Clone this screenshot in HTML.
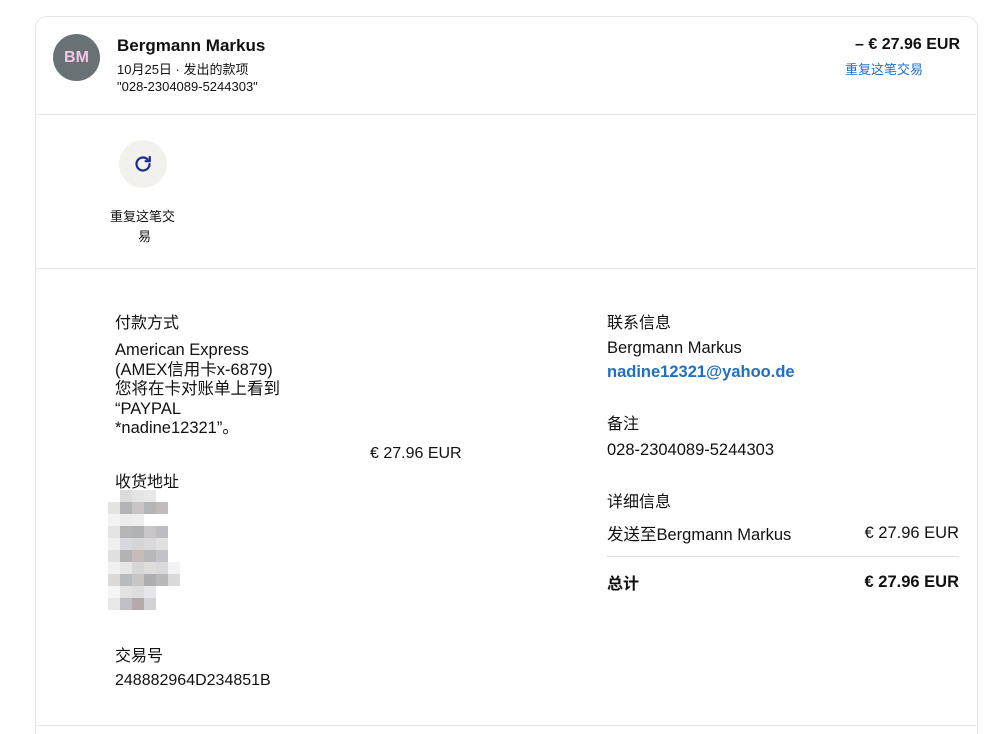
<!DOCTYPE html>
<html><head><meta charset="utf-8"><style>
html,body{margin:0;background:#fff;font-family:"Liberation Sans","Noto Sans CJK SC",sans-serif;color:#111;width:994px;height:734px;overflow:hidden;position:relative}
.card{position:absolute;left:35px;top:16px;width:941px;height:740px;border:1px solid #e6e6e6;border-radius:12px}
.a{position:absolute;white-space:nowrap}
.hr{position:absolute;left:36px;width:940px;height:1px;background:#e6e6e6}
.px{position:absolute;width:12px;height:12px}
</style></head><body>
<div class="card"></div>
<div class="a" style="left:53px;top:34px;width:47px;height:47px;border-radius:50%;background:#687173;color:#f3c6ea;font-weight:bold;font-size:16px;line-height:47px;text-align:center">BM</div>
<div class="a" style="left:117px;top:36px;font-size:17px;font-weight:bold">Bergmann Markus</div>
<div class="a" style="left:117px;top:59px;font-size:13px">10月25日 · 发出的款项</div>
<div class="a" style="left:117px;top:79px;font-size:13px">"028-2304089-5244303"</div>
<div class="a" style="right:34px;top:36px;font-size:16px;font-weight:bold">– € 27.96 EUR</div>
<div class="a" style="left:845px;top:59px;font-size:13px;color:#1f6fc5">重复这笔交易</div>
<div class="hr" style="top:114px"></div>
<div class="a" style="left:119px;top:140px;width:48px;height:48px;border-radius:50%;background:#f2f1ed"></div>
<svg class="a" style="left:131px;top:152px" width="24" height="24" viewBox="0 0 24 24"><path d="M18.5 12a6.5 6.5 0 1 1-2-4.7" fill="none" stroke="#1c2b8f" stroke-width="2.2" stroke-linecap="round"/><path d="M18.8 5v4.2h-4.2" fill="none" stroke="#1c2b8f" stroke-width="2.2" stroke-linecap="round" stroke-linejoin="round"/></svg>
<div class="a" style="left:110px;top:206px;font-size:13px">重复这笔交</div>
<div class="a" style="left:138px;top:226px;font-size:13px">易</div>
<div class="hr" style="top:268px"></div>
<div class="a" style="left:115px;top:309px;font-size:16px">付款方式</div>
<div class="a" style="left:115px;top:341px;font-size:16.5px;line-height:19.5px">American Express<br>(AMEX信用卡x-6879)<br>您将在卡对账单上看到<br>“PAYPAL<br>*nadine12321”。</div>
<div class="a" style="left:370px;top:445px;font-size:16px">€ 27.96 EUR</div>
<div class="a" style="left:115px;top:468px;font-size:16px">收货地址</div>
<div class="a" style="left:108px;top:490px;width:72px;height:124px">
<div class="px" style="left:12px;top:0;background:#dcdcdc"></div><div class="px" style="left:24px;top:0;background:#e4e4e4"></div><div class="px" style="left:36px;top:0;background:#e8e8e8"></div>
<div class="px" style="left:0;top:12px;background:#e5e2e2"></div><div class="px" style="left:12px;top:12px;background:#b4b4b6"></div><div class="px" style="left:24px;top:12px;background:#c9c4c6"></div><div class="px" style="left:36px;top:12px;background:#b5b5b7"></div><div class="px" style="left:48px;top:12px;background:#c0bcbb"></div>
<div class="px" style="left:0;top:24px;background:#f3f3f3"></div><div class="px" style="left:12px;top:24px;background:#ececec"></div><div class="px" style="left:24px;top:24px;background:#eeeeee"></div>
<div class="px" style="left:0;top:36px;background:#e4e4e4"></div><div class="px" style="left:12px;top:36px;background:#b5b5b7"></div><div class="px" style="left:24px;top:36px;background:#b0b2b4"></div><div class="px" style="left:36px;top:36px;background:#c8c6c8"></div><div class="px" style="left:48px;top:36px;background:#bdbcc0"></div>
<div class="px" style="left:0;top:48px;background:#f0f0f0"></div><div class="px" style="left:12px;top:48px;background:#d9d9dd"></div><div class="px" style="left:24px;top:48px;background:#d8d5d6"></div><div class="px" style="left:36px;top:48px;background:#d9d9db"></div><div class="px" style="left:48px;top:48px;background:#e1e1e1"></div>
<div class="px" style="left:0;top:60px;background:#e1e1e1"></div><div class="px" style="left:12px;top:60px;background:#b2b3b5"></div><div class="px" style="left:24px;top:60px;background:#c6bcbc"></div><div class="px" style="left:36px;top:60px;background:#b6b8ba"></div><div class="px" style="left:48px;top:60px;background:#c4c4c8"></div>
<div class="px" style="left:0;top:72px;background:#f1f1f1"></div><div class="px" style="left:12px;top:72px;background:#e6e6e6"></div><div class="px" style="left:24px;top:72px;background:#d6d6d6"></div><div class="px" style="left:36px;top:72px;background:#dfdcdc"></div><div class="px" style="left:48px;top:72px;background:#d9d9db"></div><div class="px" style="left:60px;top:72px;background:#f3f3f5"></div>
<div class="px" style="left:0;top:84px;background:#dcdad9"></div><div class="px" style="left:12px;top:84px;background:#b8bbbd"></div><div class="px" style="left:24px;top:84px;background:#c6c6c6"></div><div class="px" style="left:36px;top:84px;background:#aeaeb0"></div><div class="px" style="left:48px;top:84px;background:#b9b9bb"></div><div class="px" style="left:60px;top:84px;background:#dadada"></div>
<div class="px" style="left:0;top:96px;background:#f5f5f5"></div><div class="px" style="left:12px;top:96px;background:#e2e2e2"></div><div class="px" style="left:24px;top:96px;background:#dddddd"></div><div class="px" style="left:36px;top:96px;background:#e6e6ea"></div>
<div class="px" style="left:0;top:108px;background:#e8e8e8"></div><div class="px" style="left:12px;top:108px;background:#c0c0c4"></div><div class="px" style="left:24px;top:108px;background:#b4a9ad"></div><div class="px" style="left:36px;top:108px;background:#d2d2d8"></div>
</div>
<div class="a" style="left:115px;top:642px;font-size:16px">交易号</div>
<div class="a" style="left:115px;top:672px;font-size:16px">248882964D234851B</div>
<div class="a" style="left:607px;top:309px;font-size:16px">联系信息</div>
<div class="a" style="left:607px;top:339px;font-size:16.5px">Bergmann Markus</div>
<div class="a" style="left:607px;top:363px;font-size:16.5px;font-weight:bold;color:#1f6fc5">nadine12321@yahoo.de</div>
<div class="a" style="left:607px;top:410px;font-size:16px">备注</div>
<div class="a" style="left:607px;top:441px;font-size:16.5px">028-2304089-5244303</div>
<div class="a" style="left:607px;top:488px;font-size:16px">详细信息</div>
<div class="a" style="left:607px;top:521px;font-size:16.5px">发送至Bergmann Markus</div>
<div class="a" style="right:35px;top:524px;font-size:16.5px">€ 27.96 EUR</div>
<div class="a" style="left:607px;top:556px;width:352px;height:1px;background:#ddd"></div>
<div class="a" style="left:607px;top:570px;font-size:16px;font-weight:bold">总计</div>
<div class="a" style="right:35px;top:573px;font-size:16.5px;font-weight:bold">€ 27.96 EUR</div>
<div class="hr" style="top:725px"></div>
</body></html>
